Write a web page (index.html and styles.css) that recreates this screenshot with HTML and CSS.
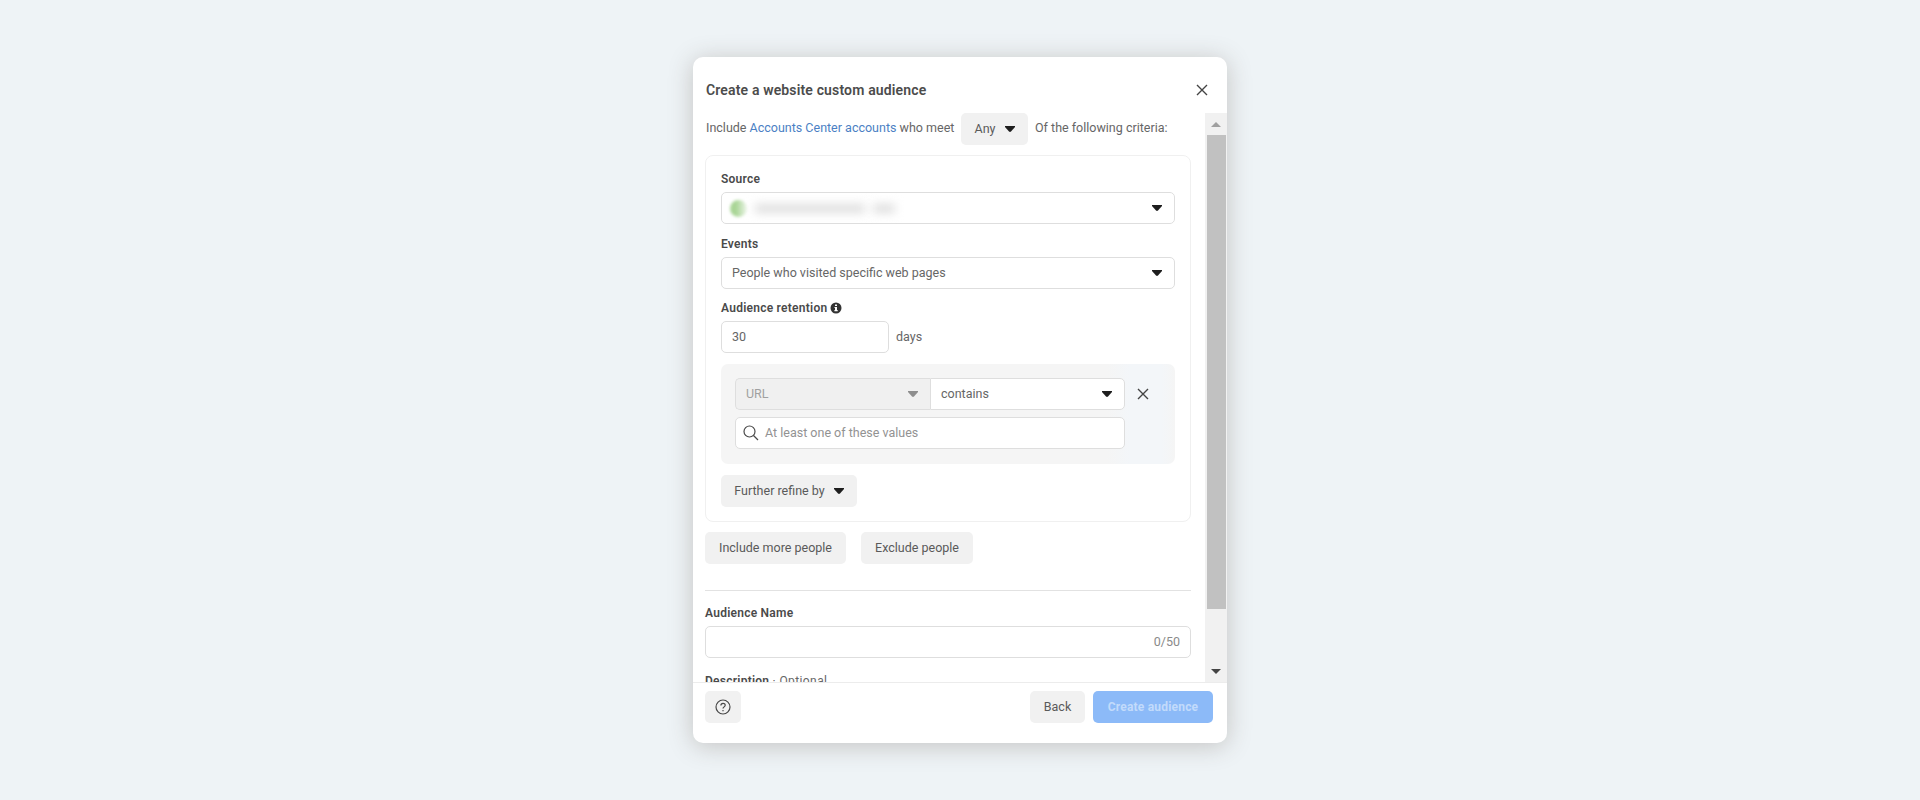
FILE: index.html
```html
<!DOCTYPE html>
<html lang="en">
<head>
    <meta charset="UTF-8">
    <meta name="viewport" content="width=device-width, initial-scale=1.0">
    <title>Create a website custom audience</title>
    <link rel="stylesheet" href="styles.css">
</head>
<body>
    <div class="modal">
        <header class="modal-header">
            <h1>Create a website custom audience</h1>
            <svg class="icon-close" viewBox="0 0 12 12"><path d="M1 1l10 10M11 1L1 11"/></svg>
        </header>

        <div class="modal-body">
            <main class="content">
                <div class="criteria">
                    <span class="criteria-text">Include <a class="link">Accounts Center accounts</a> who meet</span>
                    <button class="btn btn-any">Any <svg class="caret" viewBox="0 0 10 6"><path d="M0 0h10v1L6 5.5Q5 6.4 4 5.5L0 1z"/></svg></button>
                    <span class="criteria-end">Of the following criteria:</span>
                </div>

                <section class="card">
                    <div class="label">Source</div>
                    <div class="field source">
                        <span class="source-dot"></span>
                        <span class="source-name"></span>
                        <span class="source-id"></span>
                        <svg class="caret" viewBox="0 0 10 6"><path d="M0 0h10v1L6 5.5Q5 6.4 4 5.5L0 1z"/></svg>
                    </div>

                    <div class="label">Events</div>
                    <div class="field events">
                        <span class="events-text">People who visited specific web pages</span>
                        <svg class="caret" viewBox="0 0 10 6"><path d="M0 0h10v1L6 5.5Q5 6.4 4 5.5L0 1z"/></svg>
                    </div>

                    <div class="label label-retention">
                        <span class="retention-text">Audience retention</span>
                        <svg class="icon-info" viewBox="0 0 12 12"><circle cx="6" cy="6" r="5.5"/><path d="M5 2.5h2v1.5H5zM4.5 5H7v3h.7v1.2H4.400V8H5V6.100h-.5z"/></svg>
                    </div>
                    <div class="retention">
                        <div class="field days-field">30</div>
                        <span class="days-text">days</span>
                    </div>

                    <div class="rule">
                        <div class="rule-row">
                            <div class="field url-field">
                                <span>URL</span>
                                <svg class="caret" viewBox="0 0 10 6"><path d="M0 0h10v1L6 5.5Q5 6.4 4 5.5L0 1z"/></svg>
                            </div>
                            <div class="field contains-field">
                                <span class="contains-text">contains</span>
                                <svg class="caret" viewBox="0 0 10 6"><path d="M0 0h10v1L6 5.5Q5 6.4 4 5.5L0 1z"/></svg>
                            </div>
                            <svg class="icon-close" viewBox="0 0 12 12"><path d="M1 1l10 10M11 1L1 11"/></svg>
                        </div>
                        <div class="field search-field">
                            <svg class="icon-search" viewBox="0 0 16 16"><circle cx="6.5" cy="6.5" r="5.5"/><path d="M10.500 10.500l4.500 4.500"/></svg>
                            <span class="search-text">At least one of these values</span>
                        </div>
                    </div>

                    <button class="btn btn-refine"><span class="refine-text">Further refine by</span> <svg class="caret" viewBox="0 0 10 6"><path d="M0 0h10v1L6 5.5Q5 6.4 4 5.5L0 1z"/></svg></button>
                </section>

                <div class="people">
                    <button class="btn btn-include">Include more people</button>
                    <button class="btn btn-exclude">Exclude people</button>
                </div>

                <div class="divider"></div>

                <div class="label"><span class="name-text">Audience Name</span></div>
                <div class="field name-field"><span class="counter">0/50</span></div>
                <div class="label description"><span class="description-text">Description <span class="optional">· Optional</span></span></div>
            </main>

            <div class="scrollbar">
                <span class="arrow-up"></span>
                <span class="thumb"></span>
                <span class="arrow-down"></span>
            </div>
        </div>

        <footer class="modal-footer">
            <button class="btn btn-help"><svg class="icon-help" viewBox="0 0 16 16"><circle cx="8" cy="8" r="7"/><path d="M5.9 6.5C5.9 3.6 10.2 3.7 10.2 6.3C10.2 7.9 8 7.9 8 9.6M8 11v1.2"/></svg></button>
            <button class="btn btn-back">Back</button>
            <button class="btn btn-create">Create audience</button>
        </footer>
    </div>
</body>
</html>
```
FILE: styles.css
```css
* {
    box-sizing: border-box;
}

body {
    margin: 0;
    height: 800px;
    display: flex;
    justify-content: center;
    align-items: center;
    background: #eef3f6;
    font-family: Roboto, "Liberation Sans", sans-serif;
    font-size: 12.5px;
    line-height: 16px;
    color: #666;
    overflow: hidden;
}

.modal {
    width: 534px;
    height: 686px;
    display: flex;
    flex-direction: column;
    background: #fff;
    border-radius: 10px;
    box-shadow: 0 3px 24px rgba(70, 55, 45, 0.25);
    overflow: hidden;
}

.modal-header {
    height: 56px;
    display: flex;
    justify-content: space-between;
    align-items: center;
    padding: 9px 19px 0 13px;
}

h1 {
    margin: 0;
    font-size: 14px;
    font-weight: 600;
    letter-spacing: 0.15px;
    color: #4c4c4c;
}

.icon-close {
    width: 12px;
    height: 12px;
    fill: none;
    stroke: #444;
    stroke-width: 1.4;
}

.modal-body {
    height: 570px;
    display: flex;
    border-bottom: 1px solid #ececec;
    overflow: hidden;
}

.content {
    flex: 1;
    padding: 0 14px 0 12px;
    overflow: hidden;
}

.criteria {
    display: flex;
    height: 32px;
    margin-bottom: 10px;
    line-height: 29px;
    white-space: nowrap;
}

.criteria-text {
    width: 256px;
    padding-left: 1px;
}

.link {
    color: #4b7fc4;
}

.btn {
    height: 32px;
    display: flex;
    align-items: center;
    justify-content: center;
    padding: 0 0 1px;
    border: none;
    border-radius: 5px;
    background: #f1f1f1;
    color: #5a5a5a;
    font: inherit;
    white-space: nowrap;
}

.caret {
    width: 10px;
    height: 6px;
    flex: none;
    fill: #1e1e1e;
}

.btn-any {
    width: 67px;
    margin-right: 7px;
    padding-left: 1px;
    gap: 10px;
}

.card {
    height: 367px;
    padding: 15px 15px 0;
    border: 1px solid #f0f0f0;
    border-radius: 8px;
}

.label {
    height: 16px;
    margin-bottom: 5px;
    font-size: 12px;
    font-weight: 600;
    letter-spacing: 0.25px;
    color: #4a4a4a;
    white-space: nowrap;
}

.field {
    height: 32px;
    display: flex;
    align-items: center;
    padding: 0 12px 0 10px;
    border: 1px solid #dedede;
    border-radius: 5px;
    background: #fff;
    white-space: nowrap;
}

.field .caret {
    margin-left: auto;
}

.source {
    margin-bottom: 12px;
}

.events {
    padding-bottom: 1px;
    margin-bottom: 11px;
}

/* the account name is blurred out */
.source-dot {
    width: 17px;
    height: 17px;
    margin-left: -2px;
    border-radius: 50%;
    background: linear-gradient(to right, #a9d596 35%, #edf5e9);
    filter: blur(1.5px);
}

.source-name,
.source-id {
    height: 9px;
    margin-left: 8px;
    background: #dedede;
    filter: blur(5px);
}

.source-name {
    width: 110px;
}

.source-id {
    width: 22px;
}

.label-retention {
    display: flex;
    align-items: center;
    gap: 3px;
}

.icon-info {
    width: 12px;
    height: 12px;
    fill: #333;
}

.icon-info path {
    fill: #fff;
}

.retention {
    display: flex;
    align-items: center;
    gap: 7px;
    margin-bottom: 11px;
}

.days-field {
    width: 168px;
}

.rule {
    height: 100px;
    margin-bottom: 11px;
    padding: 14px 14px 0;
    border-radius: 7px;
    background: linear-gradient(to right, #f5f5f5 85%, #f3f6f9 90%, #f3f6f9 97%, #f5f5f5);
}

.rule-row {
    display: flex;
    align-items: center;
    margin-bottom: 7px;
}

.url-field {
    width: 195px;
    border-right: none;
    border-radius: 5px 0 0 5px;
    background: #f0f0f0;
    color: #a0a0a0;
}

.url-field .caret {
    fill: #8e8e8e;
}

.contains-field {
    width: 195px;
    border-radius: 0 5px 5px 0;
}

.rule-row .icon-close {
    margin-left: 12px;
}

.search-field {
    width: 390px;
    gap: 6px;
    padding-left: 7px;
    padding-bottom: 1px;
    color: #929292;
}

.icon-search {
    width: 16px;
    height: 16px;
    fill: none;
    stroke: #4a4a4a;
    stroke-width: 1.2;
}

.btn-refine {
    width: 136px;
    gap: 9px;
}

.people {
    display: flex;
    gap: 15px;
    margin: 10px 0 26px;
}

.btn-include {
    width: 141px;
}

.btn-exclude {
    width: 112px;
}

.divider {
    height: 1px;
    margin-bottom: 14px;
    background: #e2e2e2;
}

.name-field {
    justify-content: flex-end;
    padding-right: 10px;
    padding-bottom: 1px;
    margin-bottom: 15px;
    color: #8a8a8a;
}

.optional {
    font-weight: 400;
    letter-spacing: 0.4px;
    color: #666;
}

.scrollbar {
    width: 22px;
    display: flex;
    flex-direction: column;
    align-items: center;
    background: #f1f1f1;
}

.arrow-up,
.arrow-down {
    border: 5px solid transparent;
    border-top-width: 0;
    border-bottom: 5px solid #a0a0a0;
}

.arrow-up {
    margin: 9px 0 8px;
}

.arrow-down {
    margin: auto 0 8px;
    border-top: 5px solid #444;
    border-bottom-width: 0;
}

.thumb {
    width: 19px;
    height: 474px;
    background: #c1c1c1;
}

.modal-footer {
    display: flex;
    padding: 8px 14px 0 12px;
}

.btn-help {
    width: 36px;
}

.icon-help {
    width: 16px;
    height: 16px;
    fill: none;
    stroke: #484848;
    stroke-width: 1.2;
}

.btn-back {
    width: 55px;
    margin: 0 8px 0 auto;
}

.btn-create {
    width: 120px;
    background: #8cbaf8;
    color: #c2dbfb;
    font-size: 12px;
    font-weight: 700;
    letter-spacing: 0.2px;
}
```
